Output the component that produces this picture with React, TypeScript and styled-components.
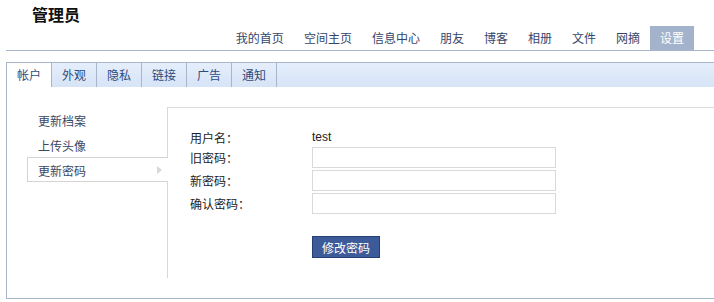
import styled, { createGlobalStyle } from 'styled-components';

const GlobalStyle = createGlobalStyle`
  body {
    margin: 0;
    background: #fff;
    font-family: "Liberation Sans", "Noto Sans CJK SC", sans-serif;
    font-size: 12px;
    color: #222;
  }
`;

const navItems = ['我的首页', '空间主页', '信息中心', '朋友', '博客', '相册', '文件', '网摘', '设置'];
const tabs = ['帐户', '外观', '隐私', '链接', '广告', '通知'];
const menuItems = ['更新档案', '上传头像', '更新密码'];

export default function App() {
  return (
    <Page>
      <GlobalStyle />
      <Title>管理员</Title>
      <Nav>
        {navItems.map((item) => (
          <NavItem key={item} $active={item === '设置'}>
            {item}
          </NavItem>
        ))}
      </Nav>

      <Box>
        <TabStrip>
          {tabs.map((tab) => (
            <Tab key={tab} $active={tab === '帐户'}>
              {tab}
            </Tab>
          ))}
        </TabStrip>

        <Body>
          <Menu>
            {menuItems.map((item) => (
              <MenuItem key={item} $active={item === '更新密码'}>
                {item}
                {item === '更新密码' && <Arrow />}
              </MenuItem>
            ))}
          </Menu>

          <Panel>
            <Form>
              <Label>用户名：</Label>
              <Value>test</Value>
              <Label>旧密码：</Label>
              <Input type="password" />
              <Label>新密码：</Label>
              <Input type="password" />
              <Label>确认密码：</Label>
              <Input type="password" />
            </Form>
            <Submit type="button">修改密码</Submit>
          </Panel>
        </Body>
      </Box>
    </Page>
  );
}

const Page = styled.div`
  width: 714px;
  height: 302px;
  overflow: hidden;
`;

const Title = styled.h1`
  margin: 0;
  padding-left: 32px;
  height: 26px;
  line-height: 28px;
  font-size: 16px;
  font-weight: bold;
  color: #111;
  font-family: "Noto Sans CJK SC", sans-serif;
`;

const Nav = styled.ul`
  display: flex;
  justify-content: flex-end;
  margin: 0 0 0 6px;
  padding: 0 20px 0 0;
  list-style: none;
  height: 24px;
  border-bottom: 1px solid #a8b6ca;
`;

const NavItem = styled.li<{ $active?: boolean }>`
  padding: 0 10px;
  line-height: 24px;
  font-family: "Noto Sans CJK SC", sans-serif;
  color: ${(p) => (p.$active ? '#fff' : '#34466b')};
  background: ${(p) => (p.$active ? '#a3b3cc' : 'transparent')};
`;

const Box = styled.div`
  margin: 11px 0 0 6px;
  border-left: 1px solid #a8b6ca;
  border-bottom: 1px solid #a8b6ca;
  height: 236px;
`;

const TabStrip = styled.ul`
  display: flex;
  margin: 0;
  padding: 0;
  list-style: none;
  height: 24px;
  border-top: 1px solid #a8b6ca;
  background: linear-gradient(#e5eefb, #d6e4f7);
`;

const Tab = styled.li<{ $active?: boolean }>`
  width: 44px;
  text-align: center;
  line-height: 24px;
  border-right: 1px solid #a8b6ca;
  font-family: "Noto Sans CJK SC", sans-serif;
  color: #2f4a7c;
  background: ${(p) => (p.$active ? '#fff' : 'transparent')};
`;

const Body = styled.div`
  display: flex;
  padding: 20px 0 0 20px;
`;

const Menu = styled.ul`
  width: 141px;
  margin: 0 -1px 0 0;
  padding: 0;
  list-style: none;
  position: relative;
  z-index: 1;
`;

const MenuItem = styled.li<{ $active?: boolean }>`
  position: relative;
  height: 25px;
  line-height: 25px;
  padding-left: 10px;
  font-family: "Noto Sans CJK SC", sans-serif;
  color: #3a4764;
  background: #fff;
  box-sizing: border-box;
  border: 1px solid ${(p) => (p.$active ? '#d4d4d4' : 'transparent')};
  border-right: none;
  margin-right: ${(p) => (p.$active ? '0' : '1px')};
`;

const Arrow = styled.span`
  position: absolute;
  right: 6px;
  top: 8px;
  width: 0;
  height: 0;
  border-top: 4px solid transparent;
  border-bottom: 4px solid transparent;
  border-left: 5px solid #d8d8d8;
`;

const Panel = styled.div`
  flex: 1;
  border-left: 1px solid #d8d8d8;
  border-top: 1px solid #dcdcdc;
  padding: 20px 0 0 22px;
  box-sizing: border-box;
  height: 171px;
`;

const Form = styled.div`
  display: grid;
  grid-template-columns: 122px 244px;
  grid-template-rows: 19px 23px 23px 23px;
  align-items: start;
`;

const Label = styled.span`
  font-family: "Noto Sans CJK SC", sans-serif;
  line-height: 21px;
  color: #222;
  &:first-child {
    line-height: 19px;
  }
`;

const Value = styled.span`
  line-height: 19px;
  font-size: 12px;
  color: #222;
`;

const Input = styled.input`
  width: 244px;
  height: 21px;
  box-sizing: border-box;
  margin: 0;
  border: 1px solid #d9d9d9;
  padding: 0 4px;
  outline: none;
`;

const Submit = styled.button`
  display: block;
  margin: 20px 0 0 122px;
  width: 68px;
  height: 22px;
  padding: 0;
  border: 1px solid #263f74;
  background: #3e5b99;
  color: #fff;
  font-size: 12px;
  font-family: "Noto Sans CJK SC", sans-serif;
  cursor: pointer;
`;
